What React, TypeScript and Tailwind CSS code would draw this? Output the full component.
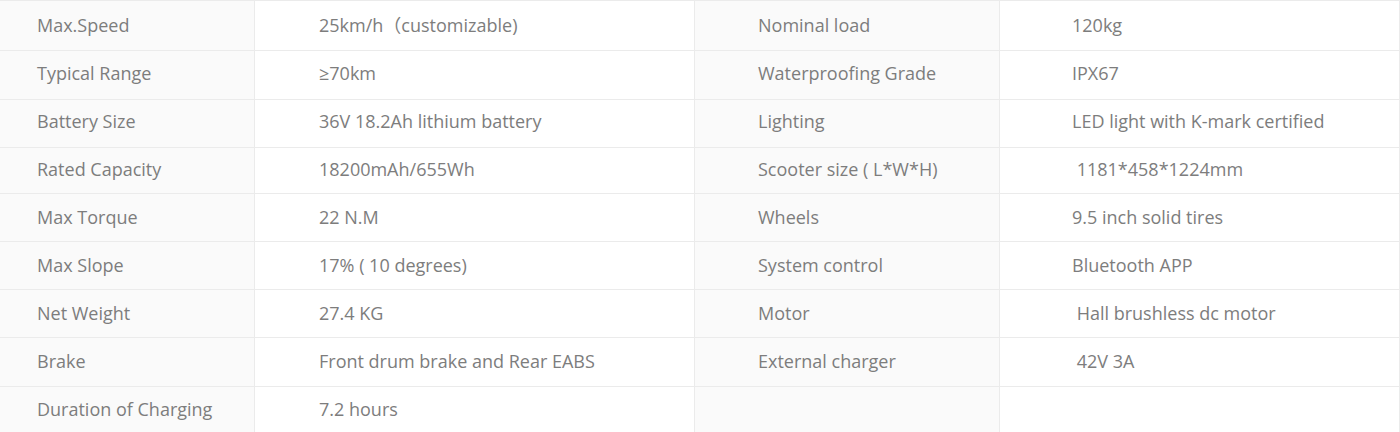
const rows = [
  { h: 'h-[50px]', p: '', a: 'Max.Speed', b: '25km/h（customizable)', c: 'Nominal load', d: '120kg' },
  { h: 'h-[49px]', p: 'pb-[4px]', a: 'Typical Range', b: '≥70km', c: 'Waterproofing Grade', d: 'IPX67' },
  { h: 'h-[48px]', p: 'pb-[4px]', a: 'Battery Size', b: '36V 18.2Ah lithium battery', c: 'Lighting', d: 'LED light with K-mark certified' },
  { h: 'h-[46px]', p: 'pb-[3px]', a: 'Rated Capacity', b: '18200mAh/655Wh', c: 'Scooter size ( L*W*H)', d: '\u00a01181*458*1224mm' },
  { h: 'h-[48px]', p: '', a: 'Max Torque', b: '22 N.M', c: 'Wheels', d: '9.5 inch solid tires' },
  { h: 'h-[48px]', p: '', a: 'Max Slope', b: '17% ( 10 degrees)', c: 'System control', d: 'Bluetooth APP' },
  { h: 'h-[48px]', p: '', a: 'Net Weight', b: '27.4 KG', c: 'Motor', d: '\u00a0Hall brushless dc motor' },
  { h: 'h-[49px]', p: 'pb-[2px]', a: 'Brake', b: 'Front drum brake and Rear EABS', c: 'External charger', d: '\u00a042V 3A' },
  { h: 'h-[46px]', p: '', a: 'Duration of Charging', b: '7.2 hours', c: '', d: '' },
];

export default function App() {
  return (
    <div className="w-[1400px] h-[432px] bg-white font-['Open_Sans','Noto_Sans_CJK_SC',sans-serif] text-[18px] text-[#7d7d7d]">
      <div className="w-[1400px] border-t border-r border-[#ebebeb]">
        {rows.map((r) => (
          <div key={r.a} className={`${r.h} flex border-b border-[#ebebeb]`}>
            <div className={`${r.p} w-[255px] shrink-0 bg-[#fafafa] flex items-center pl-[37px] border-r border-[#ebebeb]`}>
              {r.a}
            </div>
            <div className={`${r.p} w-[440px] shrink-0 flex items-center pl-[64px] border-r border-[#ebebeb]`}>
              {r.b}
            </div>
            <div className={`${r.p} w-[305px] shrink-0 bg-[#fafafa] flex items-center pl-[63px] border-r border-[#ebebeb]`}>
              {r.c}
            </div>
            <div className={`${r.p} flex-1 flex items-center pl-[72px]`}>{r.d}</div>
          </div>
        ))}
      </div>
    </div>
  );
}
